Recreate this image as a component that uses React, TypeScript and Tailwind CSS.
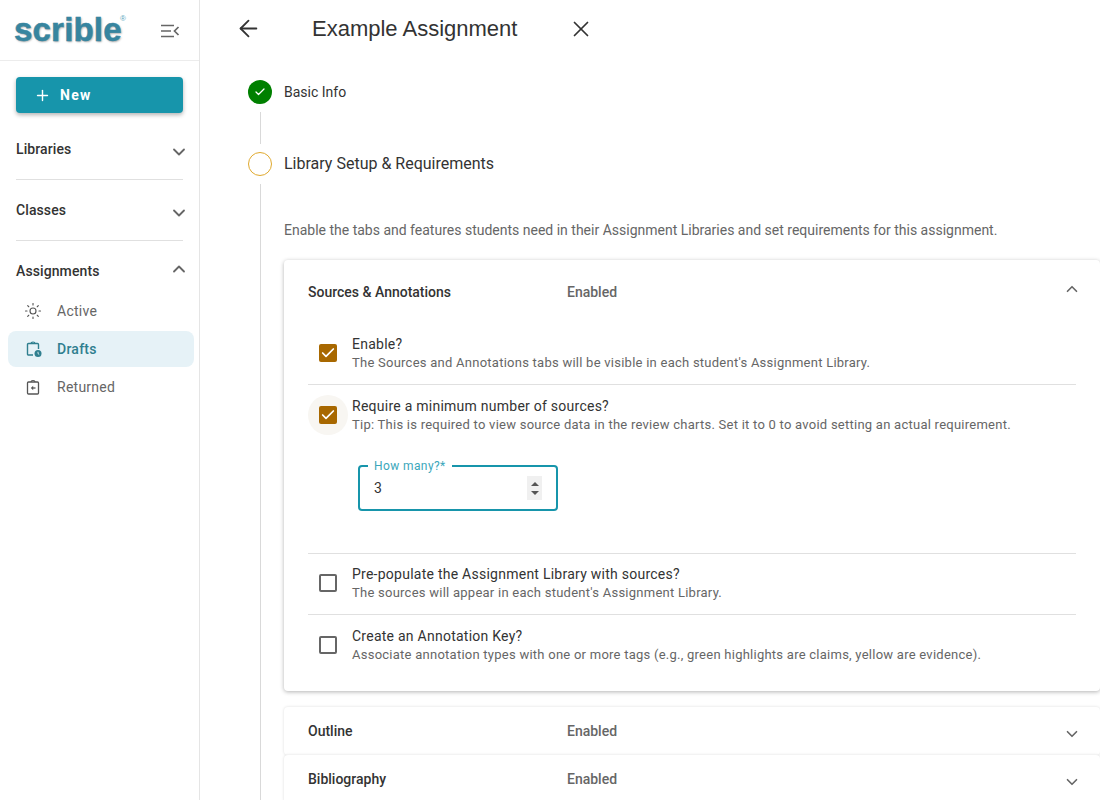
import { ArrowLeft, X, Check, Plus, ChevronDown, ChevronUp, Sun } from "lucide-react";

function SectionHead({ label, open, last }: { label: string; open?: boolean; last?: boolean }) {
  return (
    <div className={`mx-4 flex h-[61px] items-center justify-between ${last ? "" : "border-b border-[#e0e0e0]"}`}>
      <span className="text-[14px] font-medium tracking-[0.1px] text-[#333]">{label}</span>
      {open ? (
        <ChevronUp className="mb-[6px] mr-[-6px] h-[20px] w-[20px] text-[#666]" strokeWidth={2.2} />
      ) : (
        <ChevronDown className="mr-[-6px] mt-[6px] h-[20px] w-[20px] text-[#666]" strokeWidth={2.2} />
      )}
    </div>
  );
}

function Sidebar() {
  return (
    <aside className="flex h-full w-[200px] shrink-0 flex-col border-r border-[#e5e5e5] bg-white">
      <div className="flex h-[61px] shrink-0 items-center justify-between border-b border-[#ececec] pl-[14px] pr-[19px]">
        <span className="relative pb-[1px] font-['Liberation_Sans',sans-serif] text-[33px] font-bold leading-none tracking-[0.2px] text-[#37859f] [-webkit-text-stroke:0.5px_#37859f] [text-shadow:1px_1px_2px_#aaa]">
          scrible
          <sup className="absolute right-[-4px] top-[6px] text-[8px] font-normal tracking-normal text-[#5aa5bd] [-webkit-text-stroke:0] [text-shadow:none]">®</sup>
        </span>
        <svg width="20" height="14" viewBox="0 0 20 14" className="mt-[2px]" fill="none" stroke="#666" strokeWidth="1.7">
          <path d="M1 1.5h13M1 7h10M1 12.5h13" />
          <path d="M18.5 3 14.5 7l4 4" />
        </svg>
      </div>
      <div className="px-4 pt-4">
        <button className="flex h-9 w-[167px] items-center rounded-[4px] bg-[#1795ab] pl-[18px] text-[14px] font-bold tracking-[1.25px] text-white shadow-[0_2px_4px_rgba(0,0,0,0.3)]">
          <Plus className="mr-[9px] h-[17px] w-[17px]" strokeWidth={2} />
          New
        </button>
      </div>
      <div className="mt-[6px]">
        <SectionHead label="Libraries" />
        <SectionHead label="Classes" />
        <SectionHead label="Assignments" open last />
      </div>
      <nav className="mt-[-9px] flex flex-col gap-0 px-2 text-[14px] tracking-[0.25px]">
        <div className="flex h-9 items-center pl-4 text-[#666]">
          <Sun className="mr-[15px] h-[18px] w-[18px] text-[#555]" strokeWidth={1.5} />
          Active
        </div>
        <div className="mt-[2px] flex h-9 w-[186px] items-center rounded-lg bg-[#e6f2f7] pl-[18px] font-medium text-[#2f7f8f]">
          <svg width="16" height="17" viewBox="0 0 16 17" fill="none" className="mr-[15px]">
            <path d="M7 14H2.5a1 1 0 0 1-1-1V3.5a1 1 0 0 1 1-1h9a1 1 0 0 1 1 1V8" stroke="#2f7f8f" strokeWidth="1.4" />
            <path d="M5 2.5a2 1.5 0 0 1 4 0" stroke="#2f7f8f" strokeWidth="1.2" />
            <circle cx="12" cy="12.5" r="3.5" fill="#2f7f8f" />
            <path d="M12 10.8v1.8l1.2.8" stroke="#fff" strokeWidth="0.8" />
          </svg>
          Drafts
        </div>
        <div className="mt-[2px] flex h-9 items-center pl-[18px] text-[#666]">
          <svg width="15" height="17" viewBox="0 0 15 17" fill="none" className="mr-[16px]">
            <rect x="1.5" y="3" width="11" height="12" rx="1" stroke="#555" strokeWidth="1.3" />
            <path d="M5 3a2 1.5 0 0 1 4 0" stroke="#555" strokeWidth="1.2" />
            <path d="M9.5 9H6" stroke="#555" strokeWidth="1.3" />
            <path d="M7.2 6.8 4.8 9l2.4 2.2z" fill="#555" />
          </svg>
          Returned
        </div>
      </nav>
    </aside>
  );
}

function Box({ checked, halo }: { checked?: boolean; halo?: boolean }) {
  return (
    <div className={`flex h-10 w-10 shrink-0 items-center justify-center rounded-full ${halo ? "bg-[#f8f6f2]" : ""}`}>
      {checked ? (
        <div className="flex h-[18px] w-[18px] items-center justify-center rounded-[2px] bg-[#a86800]">
          <Check className="h-[16px] w-[16px] text-white" strokeWidth={2.6} />
        </div>
      ) : (
        <div className="h-[18px] w-[18px] rounded-[2px] border-2 border-[#666]" />
      )}
    </div>
  );
}

function Option({ title, desc, checked, halo, border }: { title: string; desc: string; checked?: boolean; halo?: boolean; border?: boolean }) {
  return (
    <div className={`flex h-[61px] items-center gap-[4px] pb-[2px] ${border ? "border-b border-[#e0e0e0]" : ""}`}>
      <Box checked={checked} halo={halo} />
      <div>
        <div className="text-[14px] leading-[20px] tracking-[0.25px] text-[#333]">{title}</div>
        <div className="text-[13px] leading-[18px] tracking-[0.25px] text-[#666]">{desc}</div>
      </div>
    </div>
  );
}

function CollapsedRow({ label }: { label: string }) {
  return (
    <div className="flex h-12 items-center rounded-[4px] bg-white pl-6 pr-[19px] shadow-[0_0_3px_rgba(0,0,0,0.14)]">
      <span className="w-[259px] text-[14px] font-medium text-[#333]">{label}</span>
      <span className="flex-1 text-[14px] font-medium text-[#666]">Enabled</span>
      <ChevronDown className="mt-[6px] h-[18px] w-[18px] text-[#666]" strokeWidth={2.2} />
    </div>
  );
}

export default function App() {
  return (
    <div className="flex h-screen overflow-hidden bg-white font-['Roboto','Liberation_Sans',sans-serif]">
      <Sidebar />
      <main className="flex-1 overflow-hidden">
        <header className="flex h-[57px] items-center pl-[35px]">
          <ArrowLeft className="h-[27px] w-[27px] text-[#333]" strokeWidth={1.6} />
          <h1 className="ml-[50px] font-['Liberation_Sans',sans-serif] text-[22px] font-normal text-[#333]">Example Assignment</h1>
          <X className="ml-[51px] h-[26px] w-[26px] text-[#333]" strokeWidth={1.6} />
        </header>
        <div className="mt-[23px] flex h-[24px] items-center pl-[48px]">
          <div className="flex h-6 w-6 items-center justify-center rounded-full bg-[#008000]">
            <Check className="h-[12px] w-[12px] text-white" strokeWidth={2.5} />
          </div>
          <span className="ml-3 text-[14px] text-[#333]">Basic Info</span>
        </div>
        <div className="ml-[60px] mt-2 h-8 w-px bg-[#d9d9d9]" />
        <div className="mt-2 flex h-[24px] items-center pl-[48px]">
          <div className="h-6 w-6 rounded-full border border-[#e0a92e]" />
          <span className="ml-3 text-[16px] text-[#333]">Library Setup &amp; Requirements</span>
        </div>
        <div className="ml-[60px] mt-2 border-l border-[#d9d9d9] pl-[23px]">
          <p className="pt-9 text-[14px] leading-[20px] text-[#666]">
            Enable the tabs and features students need in their Assignment Libraries and set requirements for this assignment.
          </p>
          <section className="mt-[20px] rounded-[4px] bg-white shadow-[0_1px_4px_rgba(0,0,0,0.3)]">
            <div className="flex h-[64px] items-center pl-6 pr-[19px]">
              <span className="w-[259px] text-[14px] font-medium text-[#333]">Sources &amp; Annotations</span>
              <span className="flex-1 text-[14px] font-medium text-[#666]">Enabled</span>
              <ChevronUp className="mb-[6px] h-[18px] w-[18px] text-[#666]" strokeWidth={2.2} />
            </div>
            <div className="px-6 pb-[15px]">
              <Option
                checked
                border
                title="Enable?"
                desc="The Sources and Annotations tabs will be visible in each student's Assignment Library."
              />
              <div className="border-b border-[#e0e0e0]">
                <Option
                  checked
                  halo
                  title="Require a minimum number of sources?"
                  desc="Tip: This is required to view source data in the review charts. Set it to 0 to avoid setting an actual requirement."
                />
                <div className="pb-[42px] pl-[50px] pt-[19px]">
                  <div className="relative flex h-[46px] w-[200px] items-center justify-between rounded-[4px] border-2 border-[#1795ab] pl-[14px] pr-[14px]">
                    <span className="absolute left-[8px] top-[-8px] bg-white px-[6px] text-[12px] leading-[14px] tracking-[0.4px] text-[#3ba7bb]">How many?*</span>
                    <span className="text-[14px] tracking-[0.25px] text-[#333]">3</span>
                    <div className="flex h-6 w-[15px] flex-col items-center justify-center gap-[5px] bg-[#f0f0f0]">
                      <span className="h-0 w-0 border-x-[4px] border-b-[4px] border-x-transparent border-b-[#555]" />
                      <span className="h-0 w-0 border-x-[4px] border-t-[4px] border-x-transparent border-t-[#555]" />
                    </div>
                  </div>
                </div>
              </div>
              <Option
                border
                title="Pre-populate the Assignment Library with sources?"
                desc="The sources will appear in each student's Assignment Library."
              />
              <Option
                title="Create an Annotation Key?"
                desc="Associate annotation types with one or more tags (e.g., green highlights are claims, yellow are evidence)."
              />
            </div>
          </section>
          <div className="mt-4">
            <CollapsedRow label="Outline" />
            <CollapsedRow label="Bibliography" />
          </div>
        </div>
      </main>
    </div>
  );
}
